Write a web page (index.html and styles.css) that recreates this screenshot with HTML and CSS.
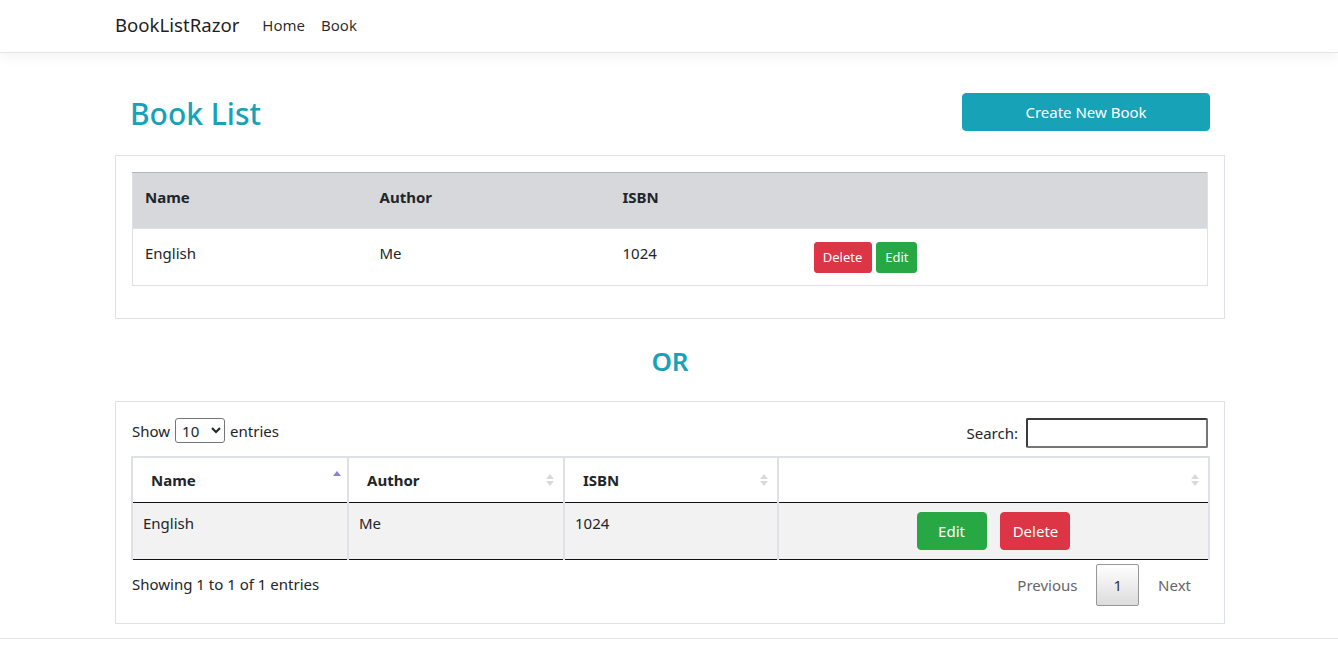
FILE: index.html
```html
<!DOCTYPE html>
<html lang="en">
<head>
<meta charset="utf-8">
<title>Book List - BookListRazor</title>
<link rel="stylesheet" href="styles.css">
</head>
<body>
<header>
  <nav class="navbar">
    <div class="container nav-inner">
      <a class="brand" href="#">BookListRazor</a>
      <ul class="nav-links">
        <li><a href="#">Home</a></li>
        <li><a href="#">Book</a></li>
      </ul>
    </div>
  </nav>
</header>

<main class="container main">
  <div class="title-row">
    <h2 class="title">Book List</h2>
    <a class="btn btn-info btn-create" href="#">Create New Book</a>
  </div>

  <div class="box">
    <table class="table1">
      <thead>
        <tr>
          <th class="c1">Name</th>
          <th class="c2">Author</th>
          <th class="c3">ISBN</th>
          <th></th>
        </tr>
      </thead>
      <tbody>
        <tr>
          <td>English</td>
          <td>Me</td>
          <td>1024</td>
          <td class="actions">
            <button class="btn btn-sm btn-danger">Delete</button>
            <button class="btn btn-sm btn-success">Edit</button>
          </td>
        </tr>
      </tbody>
    </table>
  </div>

  <h3 class="or">OR</h3>

  <div class="box box2">
    <div class="dt-top">
      <label class="dt-length">Show
        <select class="dt-select">
          <option>10</option>
          <option>25</option>
          <option>50</option>
          <option>100</option>
        </select>
        entries</label>
      <label class="dt-search">Search: <input type="search" class="dt-input"></label>
    </div>

    <table class="table2">
      <thead>
        <tr>
          <th class="d1 sorted">Name
            <svg class="sort" width="10" height="16" viewBox="0 0 10 16"><path d="M1 8 L5 3 L9 8 Z" fill="#8585de"/></svg>
          </th>
          <th class="d2">Author
            <svg class="sort" width="10" height="16" viewBox="0 0 10 16"><path d="M1 7 L5 2 L9 7 Z M1 9 L5 14 L9 9 Z" fill="#dadada"/></svg>
          </th>
          <th class="d3">ISBN
            <svg class="sort" width="10" height="16" viewBox="0 0 10 16"><path d="M1 7 L5 2 L9 7 Z M1 9 L5 14 L9 9 Z" fill="#dadada"/></svg>
          </th>
          <th class="d4">
            <svg class="sort" width="10" height="16" viewBox="0 0 10 16"><path d="M1 7 L5 2 L9 7 Z M1 9 L5 14 L9 9 Z" fill="#dadada"/></svg>
          </th>
        </tr>
      </thead>
      <tbody>
        <tr>
          <td>English</td>
          <td>Me</td>
          <td>1024</td>
          <td class="actions2">
            <button class="btn btn-success btn-wide">Edit</button>
            <button class="btn btn-danger btn-wide">Delete</button>
          </td>
        </tr>
      </tbody>
    </table>

    <div class="dt-bottom">
      <div class="dt-info">Showing 1 to 1 of 1 entries</div>
      <div class="dt-paginate">
        <a class="pg pg-disabled">Previous</a>
        <a class="pg pg-current">1</a>
        <a class="pg pg-disabled">Next</a>
      </div>
    </div>
  </div>
</main>

<footer class="footer"></footer>
</body>
</html>
```

FILE: styles.css
```css
* { box-sizing: border-box; }

html, body {
  margin: 0;
  padding: 0;
}

body {
  font-family: "Noto Sans", "Open Sans", sans-serif;
  font-size: 15px;
  color: #212529;
  background: #fff;
}

a { text-decoration: none; }

.container {
  width: 1112px;
  padding-left: 2px;
  margin: 0 auto;
}

/* Navbar */
.navbar {
  height: 53px;
  border-bottom: 1px solid #e5e5e5;
  box-shadow: 0 4px 12px rgba(0, 0, 0, 0.05);
  background: #fff;
}

.nav-inner {
  display: flex;
  align-items: center;
  height: 52px;
}

.brand {
  font-size: 18.6px;
  color: rgba(0, 0, 0, 0.9);
  margin-right: 15px;
  padding-bottom: 3px;
}

.nav-links {
  list-style: none;
  display: flex;
  margin: 0;
  padding: 0;
}

.nav-links a {
  display: block;
  padding: 0 8px 3px;
  font-size: 15px;
  color: rgba(0, 0, 0, 0.85);
}

/* Main */
.main {
  padding-top: 40px;
}

.title-row {
  display: flex;
  justify-content: space-between;
  align-items: center;
  height: 38px;
  padding: 0 15px;
  margin-bottom: 24px;
}

.title {
  margin: 0;
  font-size: 30px;
  font-weight: 500;
  color: #17a2b8;
  line-height: 38px;
  padding-top: 3px;
}

.btn {
  display: inline-block;
  border: 1px solid transparent;
  border-radius: 4px;
  color: #fff;
  font-family: inherit;
  text-align: center;
  cursor: pointer;
}

.btn-info {
  background: #17a2b8;
  border-color: #17a2b8;
}

.btn-create {
  width: 248px;
  height: 38px;
  line-height: 36px;
  font-size: 15px;
}

.btn-danger {
  background: #dc3545;
  border-color: #dc3545;
}

.btn-success {
  background: #28a745;
  border-color: #28a745;
}

.btn-sm {
  height: 31px;
  padding: 0 8px;
  font-size: 13px;
  line-height: 29px;
  border-radius: 3px;
  margin-top: 1px;
}

/* Boxes */
.box {
  border: 1px solid #dee2e6;
  padding: 16px 16px 32px;
}

.table1 {
  width: 100%;
  border-collapse: collapse;
  border: 1px solid #dee2e6;
  border-top: 1px solid #b3b7bb;
}

.table1 th {
  background: #d6d8db;
  height: 56px;
  padding: 0 12px 7px;
  text-align: left;
  font-weight: 700;
  font-size: 15px;
  vertical-align: middle;
}

.table1 td {
  height: 57px;
  padding: 12px 12px 0;
  vertical-align: top;
  font-size: 15px;
  line-height: 24px;
  border-top: 1px solid #dee2e6;
}

.table1 .c1 { width: 235px; }
.table1 .c2 { width: 243px; }
.table1 .c3 { width: 191px; }

.actions .btn { margin-right: 1px; }
.actions .btn-danger { width: 58px; padding: 0; }
.actions .btn-success { width: 41px; padding: 0; }

.or {
  margin: 0;
  height: 82px;
  line-height: 84px;
  text-align: center;
  font-size: 26px;
  font-weight: 600;
  color: #17a2b8;
}

/* Data table */
.box2 {
  padding: 16px 15px 17px 15px;
}

.dt-top {
  display: flex;
  justify-content: space-between;
  align-items: flex-start;
  height: 30px;
  margin-bottom: 8px;
  padding-left: 1px;
}

.dt-length {
  display: flex;
  align-items: center;
  gap: 4px;
  height: 25px;
}

.dt-select {
  width: 50px;
  height: 25px;
  font-family: inherit;
  font-size: 15px;
  border: 1px solid #767676;
  border-radius: 3px;
  padding: 0 2px;
  margin: 0 1px;
  background: #fff;
  color: #212529;
}

.dt-search {
  display: flex;
  align-items: center;
  gap: 8px;
}

.dt-input {
  width: 182px;
  height: 30px;
  border: 2px solid #3c3c3c;
  border-right-color: #767676;
  border-bottom-color: #767676;
  border-radius: 2px;
  margin-right: 1px;
  font-family: inherit;
}

.table2 {
  width: 1079px;
  border-collapse: collapse;
}

.table2 th {
  position: relative;
  height: 45px;
  padding: 0 18px 0 18px;
  text-align: left;
  font-weight: 700;
  font-size: 15px;
  border: 2px solid #dee2e6;
  border-bottom: 1px solid #111;
  vertical-align: middle;
}

.table2 .d1 { width: 216px; }
.table2 .d2 { width: 216px; }
.table2 .d3 { width: 214px; }

.sort {
  position: absolute;
  right: 8px;
  top: 14px;
}

.sorted .sort { top: 10px; right: 5px; }

.table2 td {
  background: #f2f2f2;
  height: 57px;
  padding: 8px 10px 0;
  vertical-align: top;
  font-size: 15px;
  line-height: 24px;
  border-left: 2px solid #dee2e6;
  border-right: 2px solid #dee2e6;
  border-bottom: 1px solid #111;
}

.actions2 {
  text-align: center;
}

.btn-wide {
  width: 70px;
  height: 38px;
  font-size: 15px;
  line-height: 36px;
  padding: 0;
  margin: 1px 5px 0;
}

.dt-bottom {
  display: flex;
  justify-content: space-between;
  align-items: center;
  margin-top: 4px;
  height: 42px;
  padding-left: 1px;
}

.dt-info {
  padding-bottom: 1px;
}

.dt-paginate {
  display: flex;
  align-items: center;
  padding-right: 1px;
}

.pg {
  display: block;
  padding: 0 16px;
  margin-left: 2px;
  height: 42px;
  line-height: 40px;
  border: 1px solid transparent;
  border-radius: 2px;
  color: #666;
  font-size: 15px;
}

.pg-current {
  color: #333;
  border-color: #979797;
  background: linear-gradient(to bottom, #fff 0%, #dcdcdc 100%);
}

.footer {
  margin-top: 14px;
  border-top: 1px solid #e5e5e5;
  height: 10px;
}
```
